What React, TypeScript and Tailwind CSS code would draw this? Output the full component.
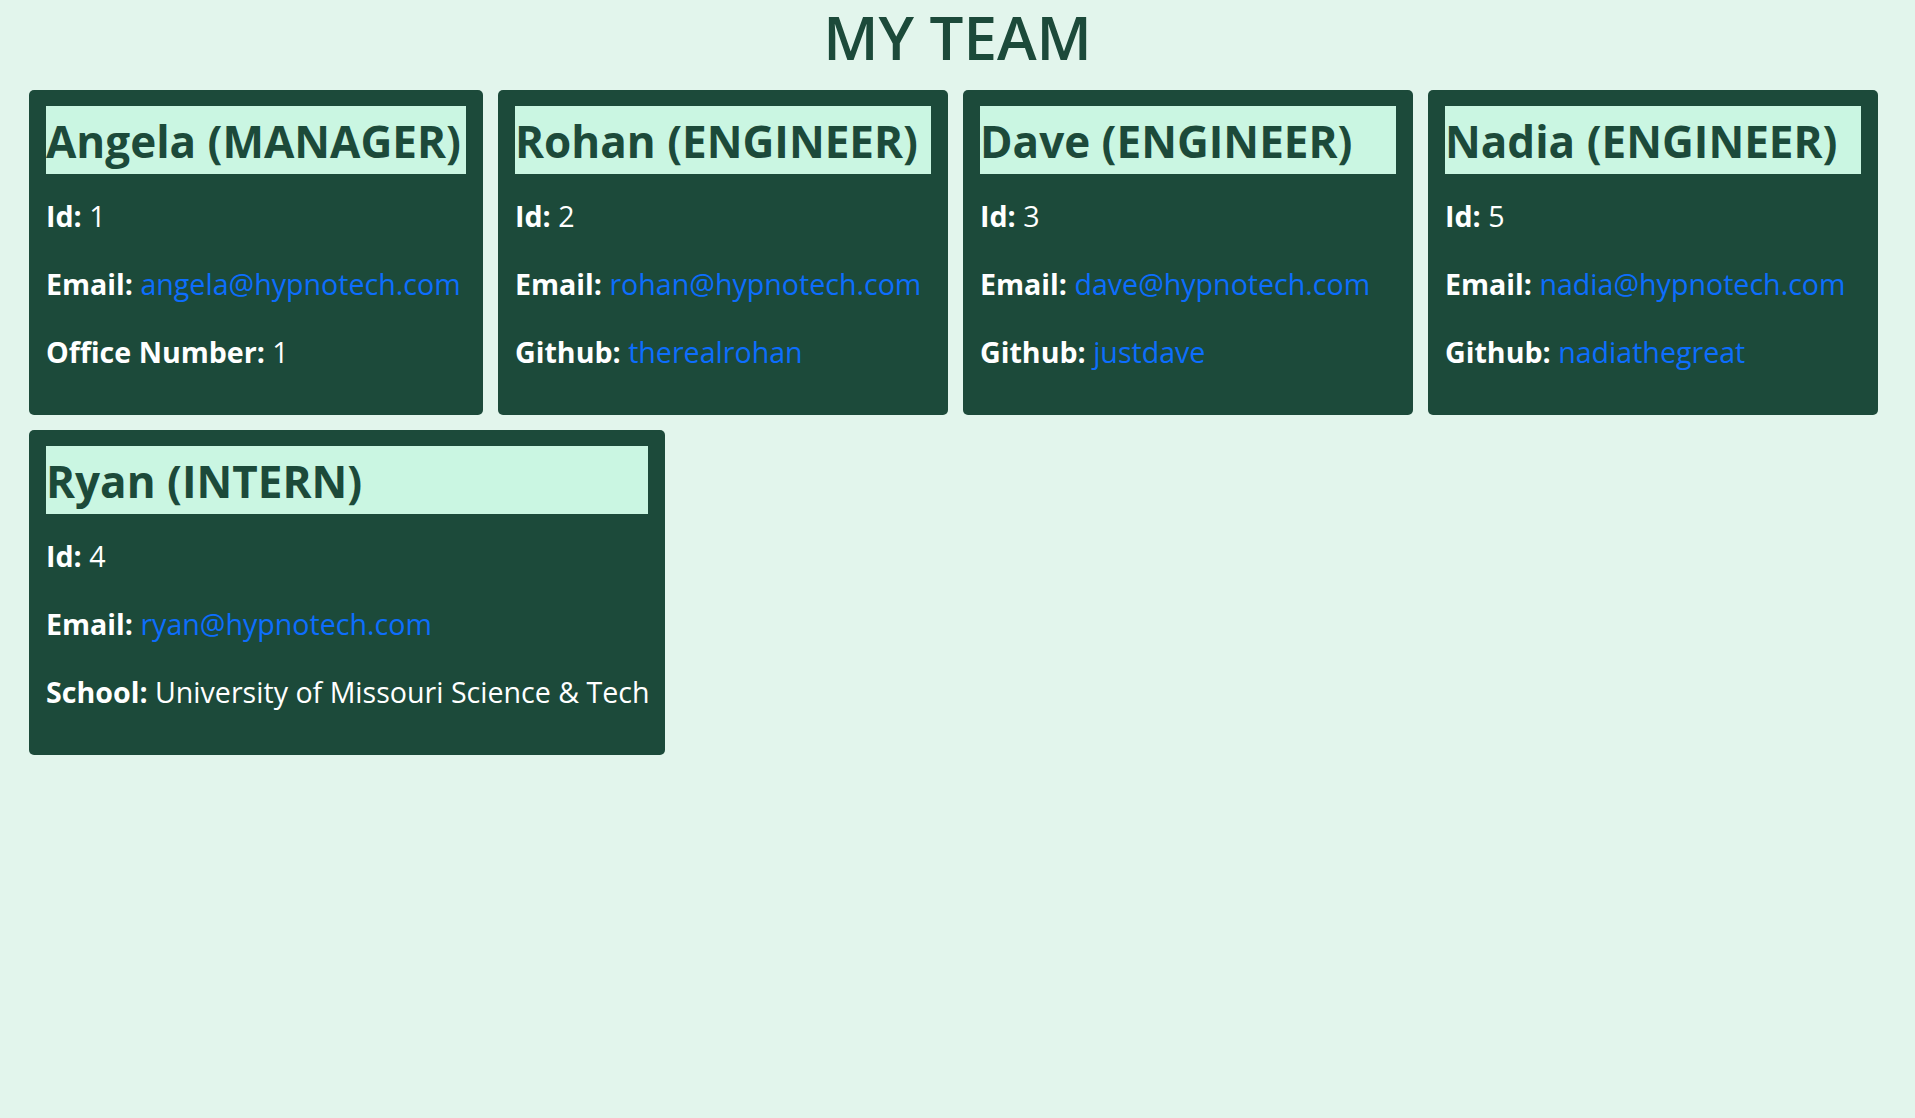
import React from "react";

type Member = {
  name: string;
  role: string;
  id: number;
  email: string;
  extraLabel: string;
  extraValue: string;
  extraLink: boolean;
  width: string;
};

const row1: Member[] = [
  { name: "Angela", role: "MANAGER", id: 1, email: "angela@hypnotech.com", extraLabel: "Office Number:", extraValue: "1", extraLink: false, width: "w-[454px]" },
  { name: "Rohan", role: "ENGINEER", id: 2, email: "rohan@hypnotech.com", extraLabel: "Github:", extraValue: "therealrohan", extraLink: true, width: "w-[450px]" },
  { name: "Dave", role: "ENGINEER", id: 3, email: "dave@hypnotech.com", extraLabel: "Github:", extraValue: "justdave", extraLink: true, width: "w-[450px]" },
  { name: "Nadia", role: "ENGINEER", id: 5, email: "nadia@hypnotech.com", extraLabel: "Github:", extraValue: "nadiathegreat", extraLink: true, width: "w-[450px]" },
];

const row2: Member[] = [
  { name: "Ryan", role: "INTERN", id: 4, email: "ryan@hypnotech.com", extraLabel: "School:", extraValue: "University of Missouri Science & Tech", extraLink: false, width: "w-[636px]" },
];

function Card({ m }: { m: Member }) {
  return (
    <div className={`${m.width} shrink-0 rounded-[5px] bg-[#1c4a3a] px-[17px] pt-4 pb-[41px]`}>
      <h2 className="h-[68px] bg-[#caf6e2] text-[44px] font-bold leading-[70px] whitespace-nowrap text-[#1c4a3a]">
        {m.name} ({m.role})
      </h2>
      <div className="mt-[19px] flex flex-col gap-[23px] text-[28.6px] leading-[45px] whitespace-nowrap text-white">
        <p>
          <b className="font-bold">Id:</b> {m.id}
        </p>
        <p>
          <b className="font-bold">Email:</b> <a className="text-[#0d6efd]">{m.email}</a>
        </p>
        <p>
          <b className="font-bold">{m.extraLabel}</b>{" "}
          {m.extraLink ? <a className="text-[#0d6efd]">{m.extraValue}</a> : m.extraValue}
        </p>
      </div>
    </div>
  );
}

export default function App() {
  return (
    <div className="min-h-[1118px] bg-[#e2f5ec] pt-[5px]" style={{ fontFamily: "'Open Sans', sans-serif" }}>
      <h1 className="h-[67px] text-center text-[60px] font-semibold leading-[64px] text-[#1c4a3a]">MY TEAM</h1>
      <div className="mt-[18px] flex flex-col gap-[15px] pl-[29px]">
        <div className="flex gap-[15px]">
          {row1.map((m) => (
            <Card key={m.name} m={m} />
          ))}
        </div>
        <div className="flex gap-[15px]">
          {row2.map((m) => (
            <Card key={m.name} m={m} />
          ))}
        </div>
      </div>
    </div>
  );
}
